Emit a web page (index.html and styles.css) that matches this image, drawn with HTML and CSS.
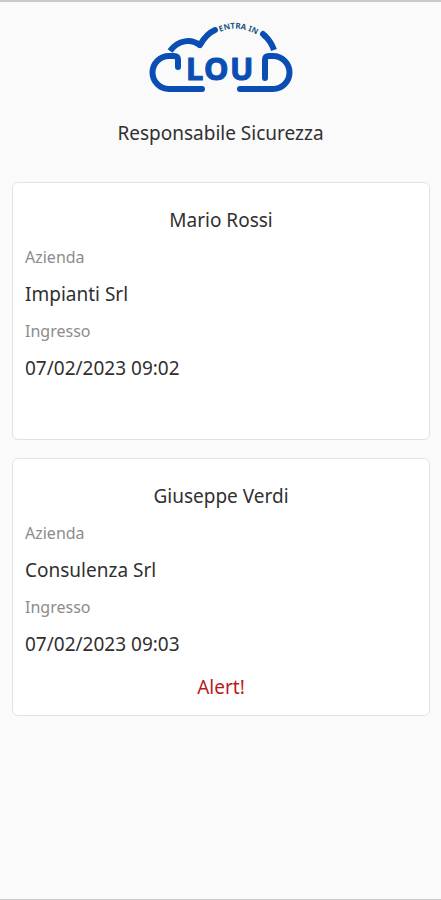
FILE: index.html
```html
<!DOCTYPE html>
<html lang="it">
<head>
    <meta charset="UTF-8">
    <meta name="viewport" content="width=device-width, initial-scale=1">
    <title>Responsabile Sicurezza</title>
    <link rel="stylesheet" href="styles.css">
</head>
<body>

    <header class="header">
        <svg class="logo" viewBox="150 18 142 76" role="img" aria-label="Entra in Cloud">
            <defs>
                <path id="arc" d="M220 32 Q240 23 262 38"/>
            </defs>
            <g class="cloud">
                <path d="M178 67 V60 Q178 56 174 56 H169 A16 16 0 0 0 169 89 H202"/>
                <path d="M265 78 V60 Q265 56 269 56 H273 A16 16 0 0 1 273 89 H240"/>
                <path d="M200 45 C204 38 208 33 215 30"/>
                <path d="M263 34 L265 36"/>
            </g>
            <path class="cloud-top" d="M170 51 C178 40 191 38 201 46"/>
            <path class="cloud-top" d="M264 35 Q271 41 274 50"/>
            <text class="logo-letters" x="186 204 230" y="80">LOU</text>
            <text class="logo-tagline"><textPath href="#arc">ENTRA IN</textPath></text>
        </svg>
        <h1 class="page-title">Responsabile Sicurezza</h1>
    </header>

    <main class="card-list">
        <section class="card">
            <h2 class="name">Mario Rossi</h2>
            <dl class="details">
                <dt>Azienda</dt>
                <dd>Impianti Srl</dd>
                <dt>Ingresso</dt>
                <dd>07/02/2023 09:02</dd>
            </dl>
        </section>

        <section class="card">
            <h2 class="name">Giuseppe Verdi</h2>
            <dl class="details">
                <dt>Azienda</dt>
                <dd>Consulenza Srl</dd>
                <dt>Ingresso</dt>
                <dd>07/02/2023 09:03</dd>
            </dl>
            <p class="alert">Alert!</p>
        </section>
    </main>

</body>
</html>
```

FILE: styles.css
```css
* {
    box-sizing: border-box;
}

body {
    font-family: 'Noto Sans', sans-serif;
    font-size: 19px;
    line-height: 28px;
    margin: 0;
    min-height: 100vh;
    background-color: #fafafa;
    color: #303030;
    border-top: 2px solid #cacaca;
    border-bottom: 1px solid #cacaca;
}

/* Logo and page title */
.header {
    display: flex;
    flex-direction: column;
    align-items: center;
    gap: 25px;
    padding-top: 16px;
}

.logo {
    display: block;
    width: 142px;
    height: 76px;
    overflow: visible;
}

.cloud,
.cloud-top {
    fill: none;
    stroke: #0a4db3;
    stroke-width: 6px;
    stroke-linecap: round;
    stroke-linejoin: round;
}

.cloud-top {
    stroke-linecap: butt;
}

.logo-letters {
    font-size: 31px;
    font-weight: 700;
    fill: #0a4db3;
    stroke: #0a4db3;
    stroke-width: 1px;
    stroke-linejoin: round;
}

.logo-tagline {
    font-size: 8px;
    font-weight: 700;
    fill: #24577f;
}

.page-title,
.name {
    margin: 0;
    font-size: inherit;
    font-weight: 400;
    text-align: center;
}

/* People on site */
.card-list {
    display: flex;
    flex-direction: column;
    gap: 18px;
    padding: 35px 11px 35px 12px;
}

.card {
    display: flex;
    flex-direction: column;
    gap: 9px;
    min-height: 258px;
    padding: 23px 12px 14px;
    background-color: #fff;
    border: 1px solid #e2e2e2;
    border-radius: 6px;
}

.details {
    display: flex;
    flex-direction: column;
    gap: 9px;
    margin: 0;
}

.details dt {
    font-size: 16px;
    color: #8c8c8c;
}

.details dd {
    margin: 0;
}

.alert {
    margin: 6px 0 0;
    text-align: center;
    color: #b71c1c;
}
```
